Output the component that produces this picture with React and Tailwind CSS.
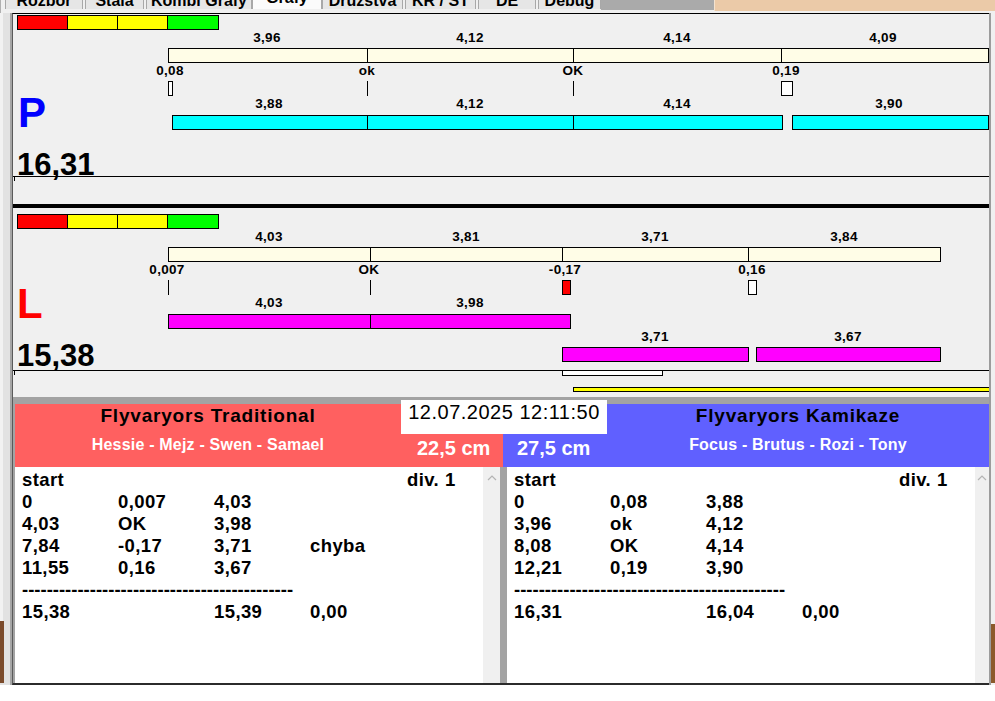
import React from 'react';

// chart x coordinates are page pixels; the chart column starts at x=168
const X0 = 168;

const tabs = [
  { t: 'Rozbor', cls: 'ml-[4px] w-[78px]' },
  { t: 'Stála', cls: 'ml-[2px] w-[59px]' },
  { t: 'Kombi Grafy', cls: 'ml-[2px] w-[106px]' },
  { t: 'Grafy', cls: 'w-[70px]', on: true },
  { t: 'Družstva', cls: 'w-[81px]' },
  { t: 'KR / ST', cls: 'ml-[2px] w-[71px]' },
  { t: 'DE', cls: 'ml-[2px] w-[58px]' },
  { t: 'Debug', cls: 'ml-[2px] w-[63px]' },
];

function TabStrip() {
  return (
    <div className="flex h-[13px] shrink-0 items-start bg-[#f0f0f0]">
      <div className="h-[13px] w-[3px] border-r border-[#b0b0b0] bg-[#e0dccc]" />
      {tabs.map((tab) => (
        <div
          key={tab.t}
          className={`h-[9px] shrink-0 overflow-hidden border-x border-[#a8a8a8] text-center text-[16px] leading-[16px] font-bold ${tab.cls} ${tab.on ? 'bg-[#fbfbfb]' : 'bg-[#e6e6e6]'}`}
        >
          <div className={tab.on ? '-mt-[10px]' : '-mt-[7.5px]'}>{tab.t}</div>
        </div>
      ))}
      <div className="h-[10px] w-[113px] shrink-0 bg-[#aaaaaa]" />
      <div className="h-[11px] w-[282px] shrink-0 border-l border-[#f4e3d0] bg-[#ebcaa8]" />
      <div className="h-[12px] w-[3px] border-l border-[#909090] bg-[#e8e8e8]" />
    </div>
  );
}

function ColorBar({ cls }) {
  return (
    <div className={`flex h-[15px] w-[202px] shrink-0 ${cls}`}>
      <div className="w-[51px] border border-black bg-[#ff0000]" />
      <div className="-ml-px w-[51px] border border-black bg-[#ffff00]" />
      <div className="-ml-px w-[51px] border border-black bg-[#ffff00]" />
      <div className="-ml-px w-[52px] border border-black bg-[#00ff00]" />
    </div>
  );
}

function Labels({ h, items }) {
  return (
    <div className={`relative shrink-0 ${h}`}>
      {items.map(([t, x]) => (
        <span
          key={x}
          className="absolute top-0 -translate-x-1/2 whitespace-nowrap text-[13.5px] leading-[15px] font-bold tracking-[0.3px]"
          style={{ left: x - X0 }}
        >
          {t}
        </span>
      ))}
    </div>
  );
}

function Bars({ color, segs }) {
  return (
    <div className="relative h-[15px] shrink-0">
      {segs.map(([a, b]) => (
        <div
          key={a}
          className={`absolute top-0 h-[15px] border border-black ${color}`}
          style={{ left: a - X0, width: b - a + 1 }}
        />
      ))}
    </div>
  );
}

function Marks({ items }) {
  return (
    <div className="relative h-[15px] shrink-0">
      {items.map((m) =>
        m.box ? (
          <div
            key={m.x}
            className={`absolute top-0 h-[15px] border border-black ${m.box}`}
            style={{ left: m.x - X0, width: m.w }}
          />
        ) : (
          <div key={m.x} className="absolute top-0 h-[15px] w-px bg-black" style={{ left: m.x - X0 }} />
        )
      )}
    </div>
  );
}

function Track({ barCls, letter, letterCls, score, children }) {
  return (
    <div className="flex h-[163px] shrink-0 border-b border-black">
      <div className="flex w-[155px] shrink-0 flex-col">
        <ColorBar cls={barCls} />
        <div className={`text-[42px] leading-[42px] font-bold ${letterCls}`}>{letter}</div>
        <div className="mt-[15px] ml-[4px] text-[31px] leading-[31px] font-bold">{score}</div>
      </div>
      <div className="flex flex-1 flex-col">{children}</div>
    </div>
  );
}

const dashes = '--------------------------------------------';

const div1 = (
  <span>
    div.<span className="ml-[6px]">1</span>
  </span>
);

function List({ rows }) {
  return (
    <div className="w-[468px] shrink-0 bg-white pt-[2px] pl-[7px] text-[18.5px] leading-[22px] font-bold tracking-[0.4px]">
      {rows.map((r, i) =>
        r === 'dash' ? (
          <div key={i} className="h-[22px] whitespace-pre tracking-normal">{dashes}</div>
        ) : (
          <div key={i} className="grid h-[22px] grid-cols-[96px_96px_96px_97px_auto] whitespace-pre">
            {r.map((c, j) => (
              <span key={j}>{c}</span>
            ))}
          </div>
        )
      )}
    </div>
  );
}

function Scroll({ w }) {
  return (
    <div className={`flex shrink-0 justify-center bg-[#f0f0f0] pt-[8px] ${w}`}>
      <svg width="10" height="6" viewBox="0 0 10 6">
        <polyline points="1,5 5,1 9,5" fill="none" stroke="#b4b4b4" strokeWidth="1.2" />
      </svg>
    </div>
  );
}

export default function App() {
  return (
    <div className="flex h-[701px] w-[995px] flex-col overflow-hidden bg-white font-['Liberation_Sans',Arial,sans-serif] text-black">
      <TabStrip />
      <div className="flex h-[672px] shrink-0">
        {/* left window edge */}
        <div className="flex w-[12px] shrink-0 flex-col border-r-2 border-[#a6a6a6] bg-[#e2e2e2]">
          <div className="flex-1 border-l-[3px] border-[#f2f2f2]" />
          <div className="mb-[2px] h-[62px] w-[4px] bg-[#7b4b2c]" />
        </div>

        <main className="flex w-[977px] shrink-0 flex-col border-t border-b-2 border-l border-t-black border-b-[#2b2b2b] border-l-[#5a5a5a] bg-[#f0f0f0]">
          <Track barCls="mt-px ml-[4px]" letter="P" letterCls="mt-[61.5px] ml-[5px] text-[#0000ff]" score="16,31">
            <div className="h-[16px] shrink-0" />
            <Labels h="h-[18px]" items={[['3,96', 267], ['4,12', 470], ['4,14', 677], ['4,09', 883]]} />
            <Bars color="bg-[#fffde7]" segs={[[168, 367], [367, 573], [573, 781], [781, 988]]} />
            <Labels h="h-[18px]" items={[['0,08', 170], ['ok', 367], ['OK', 573], ['0,19', 786]]} />
            <Marks items={[{ x: 168, w: 5, box: 'bg-white' }, { x: 367 }, { x: 573 }, { x: 781, w: 12, box: 'bg-white' }]} />
            <Labels h="h-[19px]" items={[['3,88', 269], ['4,12', 470], ['4,14', 677], ['3,90', 889]]} />
            <Bars color="bg-[#00ffff]" segs={[[172, 367], [367, 573], [573, 782], [792, 988]]} />
          </Track>

          <div className="h-[27px] shrink-0">
            <div className="ml-px h-[4px] w-px bg-black" />
          </div>
          <div className="h-[4px] shrink-0 bg-black" />

          <Track barCls="mt-[6px] ml-[4px]" letter="L" letterCls="mt-[53.5px] ml-[4px] text-[#ff0000]" score="15,38">
            <div className="h-[21px] shrink-0" />
            <Labels h="h-[18px]" items={[['4,03', 269], ['3,81', 466], ['3,71', 655], ['3,84', 844]]} />
            <Bars color="bg-[#fffde7]" segs={[[168, 370], [370, 562], [562, 748], [748, 940]]} />
            <Labels h="h-[18px]" items={[['0,007', 167], ['OK', 369], ['-0,17', 565], ['0,16', 752]]} />
            <Marks items={[{ x: 168 }, { x: 370 }, { x: 562, w: 9, box: 'bg-[#ff0000]' }, { x: 748, w: 9, box: 'bg-white' }]} />
            <Labels h="h-[19px]" items={[['4,03', 269], ['3,98', 470]]} />
            <Bars color="bg-[#ff00ff]" segs={[[168, 370], [370, 570]]} />
            <Labels h="h-[18px]" items={[['3,71', 655], ['3,67', 848]]} />
            <Bars color="bg-[#ff00ff]" segs={[[562, 748], [756, 940]]} />
          </Track>

          <div className="h-[26px] shrink-0">
            <div className="flex h-[5px]">
              <div className="ml-px h-[4px] w-px bg-black" />
              <div className="ml-[547px] h-[5px] w-[101px] border border-t-0 border-black bg-white" />
            </div>
            <div className="mt-[11px] ml-[560px] h-[5px] w-[416px] border border-r-0 border-black bg-[#ffff00]" />
          </div>

          <div className="flex flex-1 flex-col bg-[#a3a3a3] pt-[7px] pl-[2px]">
            {/* team header */}
            <div className="flex h-[63px] shrink-0">
              <div className="flex w-[386px] shrink-0 flex-col items-center bg-[#ff6060]">
                <div className="mt-px text-[19px] leading-[22px] font-bold tracking-[0.8px]">Flyvaryors Traditional</div>
                <div className="mt-[7.5px] text-[16px] leading-[20px] font-bold tracking-[0.2px] text-white">Hessie - Mejz - Swen - Samael</div>
              </div>
              <div className="flex w-[206px] shrink-0 flex-col">
                <div className="-mt-[4px] h-[34px] bg-white text-center text-[20px] leading-[24px] tracking-[0.5px]">12.07.2025 12:11:50</div>
                <div className="flex flex-1 text-[20px] leading-[20px] font-bold text-white">
                  <div className="w-[102px] bg-[#ff6060] pt-[4px] pl-[16px]">22,5 cm</div>
                  <div className="flex-1 bg-[#6060ff] pt-[4px] pl-[14px]">27,5 cm</div>
                </div>
              </div>
              <div className="flex flex-1 flex-col items-center bg-[#6060ff]">
                <div className="mt-px text-[19px] leading-[22px] font-bold tracking-[0.8px]">Flyvaryors Kamikaze</div>
                <div className="mt-[7.5px] text-[16px] leading-[20px] font-bold tracking-[0.2px] text-white">Focus - Brutus - Rozi - Tony</div>
              </div>
            </div>

            {/* result lists */}
            <div className="flex flex-1">
              <List
                rows={[
                  ['start', '', '', '', div1],
                  ['0', '0,007', '4,03', '', ''],
                  ['4,03', 'OK', '3,98', '', ''],
                  ['7,84', '-0,17', '3,71', 'chyba', ''],
                  ['11,55', '0,16', '3,67', '', ''],
                  'dash',
                  ['15,38', '', '15,39', '0,00', ''],
                ]}
              />
              <Scroll w="w-[17px]" />
              <div className="w-[7px] shrink-0 bg-[#a3a3a3]" />
              <List
                rows={[
                  ['start', '', '', '', div1],
                  ['0', '0,08', '3,88', '', ''],
                  ['3,96', 'ok', '4,12', '', ''],
                  ['8,08', 'OK', '4,14', '', ''],
                  ['12,21', '0,19', '3,90', '', ''],
                  'dash',
                  ['16,31', '', '16,04', '0,00', ''],
                ]}
              />
              <Scroll w="w-[14px]" />
            </div>
          </div>
        </main>

        {/* right window edge */}
        <div className="flex w-[6px] shrink-0 flex-col border-l-2 border-[#9c9c9c] bg-[#f0f0f0]">
          <div className="flex-1" />
          <div className="mb-[2px] h-[59px] bg-[#8b5a2b]" />
        </div>
      </div>
    </div>
  );
}
